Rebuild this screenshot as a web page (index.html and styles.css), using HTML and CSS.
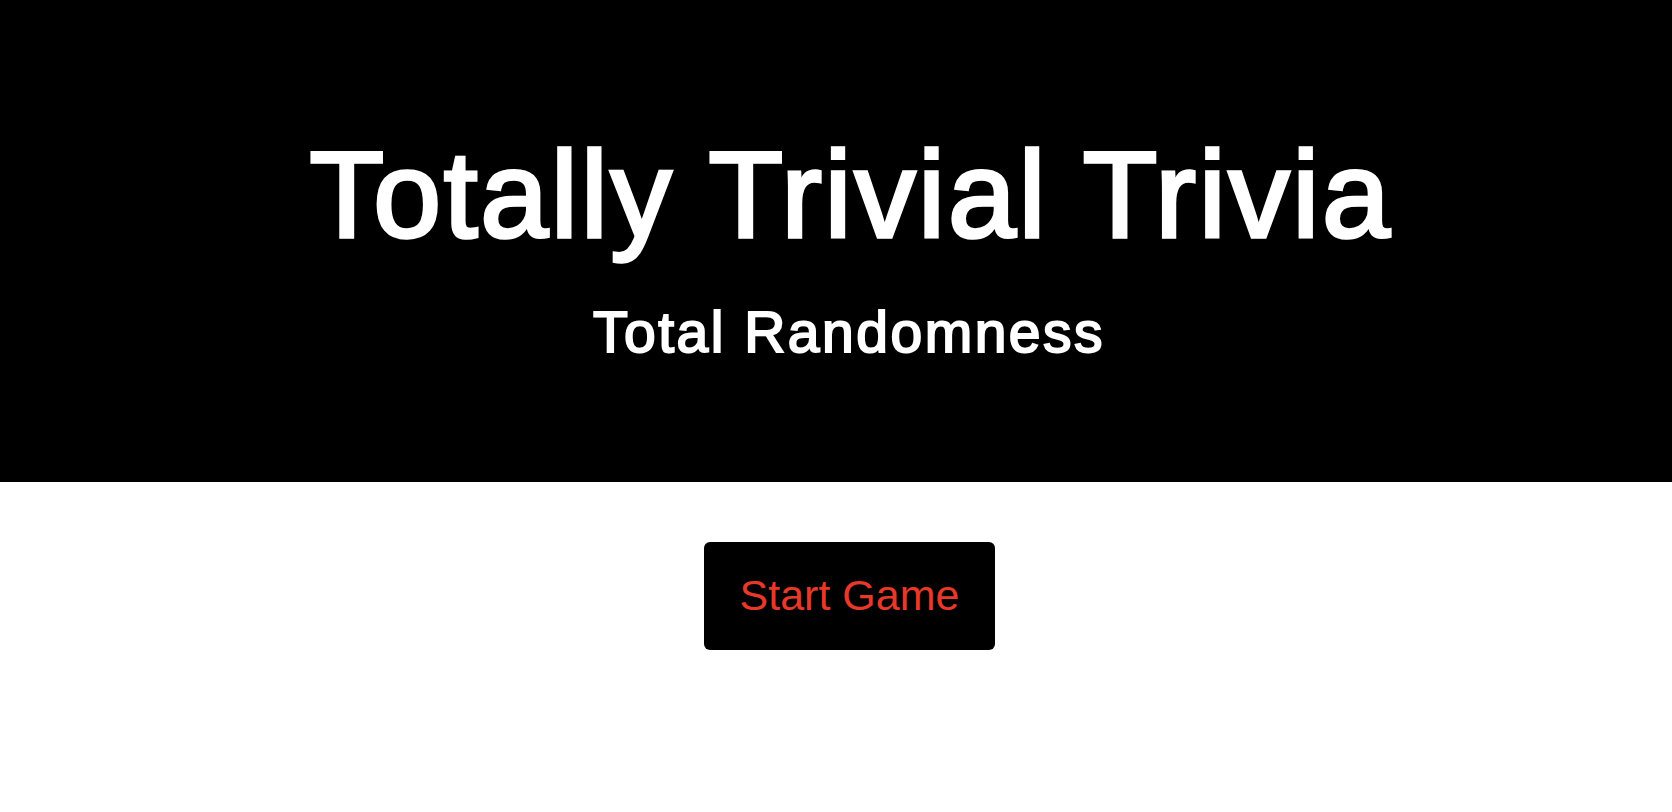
FILE: index.html
```html
<!DOCTYPE html>
<html lang="en">
<head>
<meta charset="utf-8">
<title>Totally Trivial Trivia</title>
<link rel="stylesheet" href="styles.css">
</head>
<body>
<header class="hero">
  <h1 class="hero-title">Totally Trivial Trivia</h1>
  <h2 class="hero-subtitle">Total Randomness</h2>
</header>
<main class="stage">
  <button class="start-btn" type="button">Start Game</button>
</main>
</body>
</html>
```
FILE: styles.css
```css
html, body {
  margin: 0;
  padding: 0;
  background: #ffffff;
}

body {
  font-family: "Liberation Sans", Arial, Helvetica, sans-serif;
}

.hero {
  background: #000000;
  color: #ffffff;
  text-align: center;
  padding: 134px 0 121px 26px;
  display: flex;
  flex-direction: column;
  align-items: center;
}

.hero-title {
  margin: 0 0 0 4px;
  font-size: 122px;
  line-height: 122px;
  font-weight: 400;
  letter-spacing: 2.7px;
  -webkit-text-stroke: 3.5px #ffffff;
  white-space: nowrap;
}

.hero-subtitle {
  margin: 48px 0 0;
  font-size: 57px;
  line-height: 57px;
  font-weight: 400;
  letter-spacing: 2.5px;
  -webkit-text-stroke: 2px #ffffff;
  white-space: nowrap;
}

.stage {
  display: flex;
  justify-content: center;
  padding: 60px 0 0 27px;
}

.start-btn {
  background: #000000;
  color: #e8382a;
  border: none;
  border-radius: 6px;
  font-family: "Liberation Sans", Arial, Helvetica, sans-serif;
  font-size: 43px;
  line-height: 43px;
  padding: 32px 36px 33px;
  cursor: pointer;
}
```
